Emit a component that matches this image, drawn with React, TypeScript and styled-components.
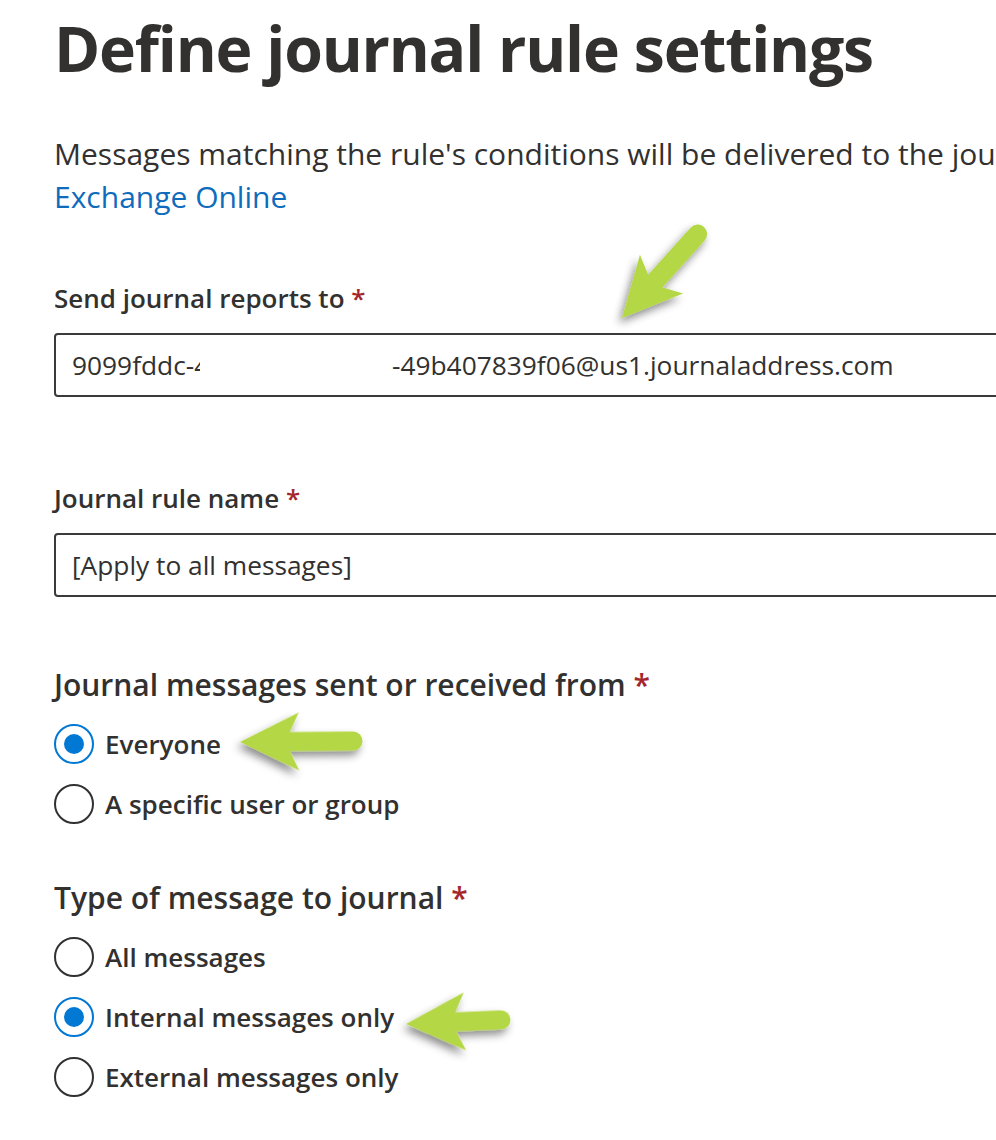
import React from 'react'
import styled, { createGlobalStyle } from 'styled-components'

const GlobalStyle = createGlobalStyle`
  html, body {
    margin: 0;
    padding: 0;
    background: #fff;
  }
  body {
    font-family: 'Open Sans', 'Noto Sans', sans-serif;
    color: #323130;
    overflow: hidden;
  }
`

const App = () => (
  <Page>
    <GlobalStyle />
    <Title>Define journal rule settings</Title>

    <Description>
      Messages matching the rule's conditions will be delivered to the jou
      <br />
      <Link href="#">Exchange Online</Link>
    </Description>

    <Field $top={63}>
      <Label>Send journal reports to <Required>*</Required></Label>
      <Input>
        <Clipped $width={128}>9099fddc-4</Clipped>
        <Redacted $width={192} />
        <span>-49b407839f06@us1.journaladdress.com</span>
      </Input>
    </Field>

    <Field $top={84}>
      <Label>Journal rule name <Required>*</Required></Label>
      <Input>[Apply to all messages]</Input>
    </Field>

    <Group $top={66}>
      <GroupTitle>Journal messages sent or received from <Required>*</Required></GroupTitle>
      <Radio checked label="Everyone" />
      <Radio label="A specific user or group" />
    </Group>

    <Group $top={42}>
      <GroupTitle>Type of message to journal <Required>*</Required></GroupTitle>
      <Radio label="All messages" />
      <Radio checked label="Internal messages only" />
      <Radio label="External messages only" />
    </Group>

    <Annotations />
  </Page>
)

const Radio = ({ label, checked = false }: { label: string; checked?: boolean }) => (
  <RadioRow>
    <RadioCircle $checked={checked} />
    <RadioLabel>{label}</RadioLabel>
  </RadioRow>
)

// the green callout arrows laid over the form
const Arrow = ({ x, y, length, angle }: { x: number; y: number; length: number; angle: number }) => (
  <g transform={`translate(${x} ${y}) rotate(${angle})`}>
    <line x1={40} y1={0} x2={length - 9} y2={0} stroke="#b4d744" strokeWidth={19} strokeLinecap="round" />
    <path d="M0 0 L59 -29 L48 -6 L48 6 L59 29 Z" fill="#b4d744" />
  </g>
)

const Annotations = () => (
  <Overlay width="996" height="1140" viewBox="0 0 996 1140">
    <defs>
      <filter id="arrowShadow" x="-30%" y="-30%" width="160%" height="160%">
        <feDropShadow dx="-3" dy="5" stdDeviation="4" floodColor="#000" floodOpacity="0.45" />
      </filter>
    </defs>
    <g filter="url(#arrowShadow)">
      <Arrow x={622} y={318} length={122} angle={-48} />
      <Arrow x={240} y={742} length={122} angle={-0.5} />
      <Arrow x={406} y={1024} length={104} angle={-2.5} />
    </g>
  </Overlay>
)

const Page = styled.div`
  position: relative;
  width: 996px;
  height: 1140px;
  padding-left: 54px;
  box-sizing: border-box;
  overflow: hidden;
  display: flex;
  flex-direction: column;
  align-items: flex-start;
`

const Title = styled.h1`
  margin: 0;
  font-size: 62.5px;
  line-height: 96px;
  font-weight: 700;
  letter-spacing: -1.2px;
  color: #323130;
  white-space: nowrap;
`

const Description = styled.p`
  margin: 36px 0 0;
  font-size: 30px;
  line-height: 43px;
  white-space: nowrap;
`

const Link = styled.a`
  color: #0f6cbd;
  text-decoration: none;
`

const Field = styled.div<{ $top: number }>`
  margin-top: ${p => p.$top}px;
  width: 100%;
  display: flex;
  flex-direction: column;
  gap: 18px;
`

const Label = styled.div`
  font-size: 26px;
  line-height: 34px;
  font-weight: 600;
  white-space: nowrap;
`

const Required = styled.span`
  color: #a4262c;
`

const Input = styled.div`
  width: 1000px;
  height: 64px;
  box-sizing: border-box;
  border: 2px solid #3b3a39;
  border-radius: 4px;
  padding: 0 16px;
  display: flex;
  align-items: center;
  font-size: 26.3px;
  color: #323130;
  white-space: nowrap;
`

const Clipped = styled.span<{ $width: number }>`
  display: inline-block;
  width: ${p => p.$width}px;
  overflow: hidden;
`

const Redacted = styled.span<{ $width: number }>`
  display: inline-block;
  width: ${p => p.$width}px;
`

const Group = styled.div<{ $top: number }>`
  margin-top: ${p => p.$top}px;
  display: flex;
  flex-direction: column;
`

const GroupTitle = styled.div`
  font-size: 30px;
  line-height: 44px;
  font-weight: 600;
  white-space: nowrap;
  margin-bottom: 7px;
`

const RadioRow = styled.div`
  display: flex;
  align-items: center;
  gap: 11px;
  height: 60px;
`

const RadioCircle = styled.span<{ $checked: boolean }>`
  position: relative;
  width: 40px;
  height: 40px;
  box-sizing: border-box;
  border-radius: 50%;
  border: 2px solid ${p => (p.$checked ? '#0078d4' : '#323130')};
  flex-shrink: 0;

  &::after {
    content: '';
    display: ${p => (p.$checked ? 'block' : 'none')};
    position: absolute;
    inset: 8px;
    border-radius: 50%;
    background: #0078d4;
  }
`

const RadioLabel = styled.span`
  font-size: 26px;
  font-weight: 600;
  white-space: nowrap;
`

const Overlay = styled.svg`
  position: absolute;
  left: 0;
  top: 0;
  pointer-events: none;
`

export default App
